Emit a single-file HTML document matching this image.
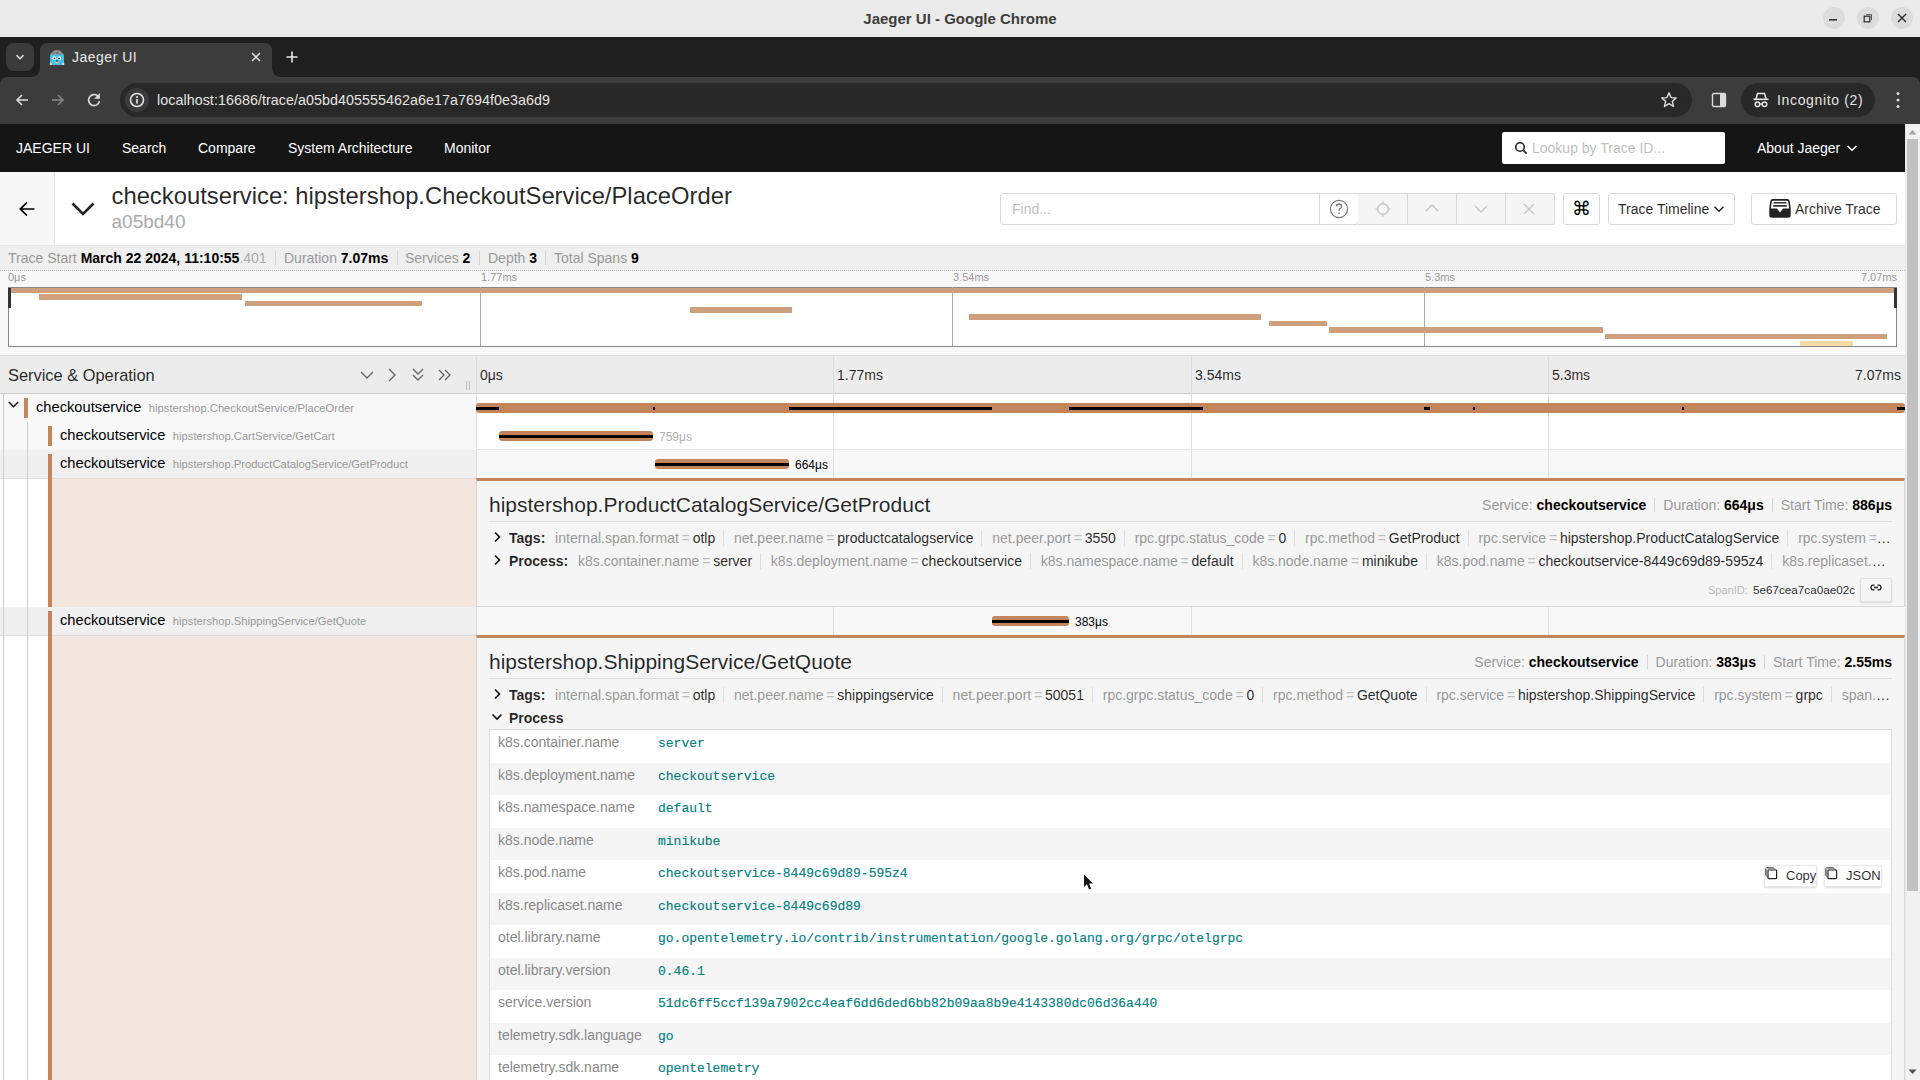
<!DOCTYPE html>
<html><head><meta charset="utf-8"><style>
*{box-sizing:border-box;margin:0;padding:0}
html,body{width:1920px;height:1080px;overflow:hidden;background:#fff;font-family:"Liberation Sans",sans-serif;color:rgba(0,0,0,.85)}
.a{position:absolute}
.nw{white-space:nowrap}
#titlebar{left:0;top:0;width:1920px;height:37px;background:#ebebeb}
#titlebar .t{left:0;width:1920px;top:10px;text-align:center;font-size:15px;font-weight:700;color:#3d3d3d}
#tabstrip{left:0;top:37px;width:1920px;height:40px;background:#1f1f1f}
#toolbar{left:0;top:77px;width:1920px;height:47px;background:#3c3c3c}
#urlpill{left:120px;top:83px;width:1572px;height:34px;border-radius:17px;background:#282828}
#nav{left:0;top:124px;width:1905px;height:48px;background:#151515}
.navi{top:140px;font-size:14px;color:#fff;line-height:16px}
.t14{font-size:14px;line-height:16px}
.lbl{color:#999}
.b{font-weight:700;color:#000}
.sep{width:1px;background:#ddd}
.btn{border:1px solid #d9d9d9;border-radius:3px;background:#fff}
.row{left:0;width:1905px;height:28px}
.svc{font-size:14.7px;color:#000}
.op{font-size:11.2px;color:#999}
.kv{white-space:nowrap;overflow:hidden;text-overflow:ellipsis;font-size:14px;line-height:16px;color:rgba(0,0,0,.85)}
.kv .it{margin-left:.7em;padding-right:.5rem;border-right:1px solid #ddd}
.kv .it:last-child{border-right:none;padding-right:0}
.kv .k{color:#999}
.kv .d{color:#bbb;padding:0 .2em}
.tblk{color:#888;font-size:14px;line-height:16px}
.tblv{color:teal;font-family:"Liberation Mono",monospace;font-size:13px;line-height:17px;white-space:pre;-webkit-text-stroke:.15px teal}
</style></head><body>
<div id="titlebar" class="a"><div class="a t">Jaeger UI - Google Chrome</div>
 <svg class="a" style="left:1822px;top:7px" width="24" height="22" viewBox="0 0 24 22"><circle cx="12" cy="11" r="11" fill="#dcdcdc"/><rect x="7" y="12" width="8" height="1.6" fill="#333"/></svg>
 <svg class="a" style="left:1856px;top:7px" width="24" height="22" viewBox="0 0 24 22"><circle cx="12" cy="11" r="11" fill="#dcdcdc"/><rect x="8.2" y="9.2" width="5.6" height="5.6" fill="none" stroke="#333" stroke-width="1.3"/><path d="M10 7.6H15.5V13" fill="none" stroke="#555" stroke-width="1"/></svg>
 <svg class="a" style="left:1890px;top:7px" width="24" height="22" viewBox="0 0 24 22"><circle cx="12" cy="11" r="11" fill="#dcdcdc"/><path d="M8 7L16 15M16 7L8 15" stroke="#333" stroke-width="1.5"/></svg>
</div>
<div id="tabstrip" class="a"></div>
<div class="a" style="left:6px;top:43px;width:28px;height:28px;border-radius:8px;background:#3b3b3b"></div>
<svg class="a" style="left:14px;top:51px" width="12" height="12" viewBox="0 0 12 12"><path d="M2.5 4.2L6 7.7L9.5 4.2" fill="none" stroke="#e6e6e6" stroke-width="1.6"/></svg>
<svg class="a" style="left:30px;top:43px" width="262" height="34" viewBox="0 0 262 34"><path d="M0 34Q10 34 10 24V8Q10 0 18 0H234Q242 0 242 8V24Q242 34 252 34Z" fill="#3c3c3c"/></svg>
<svg class="a" style="left:48px;top:49px" width="18" height="18" viewBox="0 0 18 18"><path d="M2 7Q2 4 5 4H13Q16 4 16 7V16H2Z" fill="#3ec2ea"/><path d="M3 6Q4 1 9 1Q14 1 15 6L13 5.5H5Z" fill="#8c8c8c"/><circle cx="9.2" cy="4" r=".7" fill="#a00"/><circle cx="6.3" cy="9.2" r="1.9" fill="#fff"/><circle cx="11.3" cy="9.2" r="1.9" fill="#fff"/><circle cx="6.5" cy="9.4" r=".9" fill="#000"/><circle cx="11.1" cy="9.4" r=".9" fill="#000"/><rect x="8" y="11.4" width="2" height="1.6" fill="#222"/><rect x="7.6" y="12.6" width="2.8" height="1.6" fill="#f3d9a8"/><rect x="1.8" y="13.8" width="2" height="2.2" fill="#f3d9a8"/><rect x="14.2" y="13.8" width="2" height="2.2" fill="#f3d9a8"/></svg>
<div class="a nw" style="left:72px;top:49px;font-size:14px;color:#e8e8e8;letter-spacing:.5px">Jaeger UI</div>
<svg class="a" style="left:250px;top:51px" width="12" height="12" viewBox="0 0 12 12"><path d="M2 2L10 10M10 2L2 10" stroke="#e6e6e6" stroke-width="1.5"/></svg>
<svg class="a" style="left:286px;top:51px" width="12" height="12" viewBox="0 0 12 12"><path d="M6 0.5V11.5M0.5 6H11.5" stroke="#e6e6e6" stroke-width="1.6"/></svg>
<div id="toolbar" class="a"></div><svg class="a" style="left:0;top:77px" width="8" height="8" viewBox="0 0 8 8"><path d="M0 0H8Q0 0 0 8Z" fill="#1f1f1f"/></svg><svg class="a" style="left:1912px;top:77px" width="8" height="8" viewBox="0 0 8 8"><path d="M8 0H0Q8 0 8 8Z" fill="#1f1f1f"/></svg>
<svg class="a" style="left:14px;top:92px" width="16" height="16" viewBox="0 0 16 16"><path d="M14 8H3M8 3L3 8L8 13" fill="none" stroke="#dcdcdc" stroke-width="1.6"/></svg>
<svg class="a" style="left:50px;top:92px" width="16" height="16" viewBox="0 0 16 16"><path d="M2 8H13M8 3L13 8L8 13" fill="none" stroke="#8a8a8a" stroke-width="1.6"/></svg>
<svg class="a" style="left:86px;top:92px" width="16" height="16" viewBox="0 0 16 16"><path d="M13.5 9.2A5.5 5.5 0 1 1 11.6 3.8" fill="none" stroke="#dcdcdc" stroke-width="1.6"/><path d="M13.9 1V6.8H8.1Z" fill="#dcdcdc"/></svg>
<div id="urlpill" class="a"></div>
<div class="a" style="left:125px;top:88px;width:24px;height:24px;border-radius:12px;background:#3b3b3b"></div>
<svg class="a" style="left:129px;top:92px" width="16" height="16" viewBox="0 0 16 16"><circle cx="8" cy="8" r="6.5" fill="none" stroke="#e6e6e6" stroke-width="1.5"/><rect x="7.2" y="7" width="1.6" height="4.6" fill="#e6e6e6"/><circle cx="8" cy="5" r="1" fill="#e6e6e6"/></svg>
<div class="a nw" style="left:157px;top:91.5px;font-size:14.3px;color:#e3e3e3;letter-spacing:.05px">localhost:16686/trace/a05bd405555462a6e17a7694f0e3a6d9</div>
<svg class="a" style="left:1660px;top:91px" width="18" height="18" viewBox="0 0 18 18"><path d="M9 1.8L11.1 6.6L16.2 7L12.3 10.4L13.5 15.4L9 12.7L4.5 15.4L5.7 10.4L1.8 7L6.9 6.6Z" fill="none" stroke="#dcdcdc" stroke-width="1.4" stroke-linejoin="round"/></svg>
<svg class="a" style="left:1711px;top:92px" width="16" height="16" viewBox="0 0 16 16"><rect x="1.5" y="1.5" width="13" height="13" rx="1.5" fill="none" stroke="#dcdcdc" stroke-width="1.4"/><rect x="9" y="2" width="5" height="12" fill="#dcdcdc"/></svg>
<div class="a" style="left:1741px;top:83px;width:134px;height:34px;border-radius:17px;background:#282828"></div>
<svg class="a" style="left:1752px;top:92px" width="18" height="16" viewBox="0 0 18 16"><path d="M4 7L5.5 1.5H12.5L14 7" fill="none" stroke="#e6e6e6" stroke-width="1.5"/><rect x="1.5" y="6.5" width="15" height="1.6" fill="#e6e6e6"/><circle cx="5.5" cy="12.3" r="2.3" fill="none" stroke="#e6e6e6" stroke-width="1.5"/><circle cx="12.5" cy="12.3" r="2.3" fill="none" stroke="#e6e6e6" stroke-width="1.5"/><path d="M7.8 12H10.2" stroke="#e6e6e6" stroke-width="1.3"/></svg>
<div class="a nw" style="left:1777px;top:92px;font-size:14px;color:#e3e3e3;letter-spacing:.65px">Incognito (2)</div>
<svg class="a" style="left:1894px;top:91px" width="8" height="18" viewBox="0 0 8 18"><circle cx="4" cy="2.5" r="1.5" fill="#dcdcdc"/><circle cx="4" cy="9" r="1.5" fill="#dcdcdc"/><circle cx="4" cy="15.5" r="1.5" fill="#dcdcdc"/></svg>

<div id="nav" class="a"></div>
<div class="a navi nw" style="left:16px">JAEGER UI</div>
<div class="a navi nw" style="left:122px">Search</div>
<div class="a navi nw" style="left:198px">Compare</div>
<div class="a navi nw" style="left:288px">System Architecture</div>
<div class="a navi nw" style="left:444px">Monitor</div>
<div class="a" style="left:1502px;top:132px;width:223px;height:32px;background:#fff;border-radius:2px"></div>
<svg class="a" style="left:1514px;top:141px" width="14" height="14" viewBox="0 0 14 14"><circle cx="6" cy="6" r="4.3" fill="none" stroke="#222" stroke-width="1.6"/><path d="M9.2 9.2L12.6 12.6" stroke="#222" stroke-width="1.8"/></svg>
<div class="a nw t14" style="left:1532px;top:140px;color:#bfbfbf">Lookup by Trace ID...</div>
<div class="a nw t14" style="left:1757px;top:140px;color:#fff">About Jaeger</div>
<svg class="a" style="left:1846px;top:143px" width="12" height="10" viewBox="0 0 12 10"><path d="M1.5 3L6 7.2L10.5 3" fill="none" stroke="#fff" stroke-width="1.5"/></svg>
<div class="a" style="left:0;top:172px;width:1905px;height:73px;background:#fff"></div>
<div class="a" style="left:0;top:172px;width:55px;height:73px;background:#f7f7f7;border-right:1px solid #e6e6e6"></div>
<svg class="a" style="left:18px;top:200px" width="18" height="18" viewBox="0 0 18 18"><path d="M16.5 9H2.5M9 2.3L2.3 9L9 15.7" fill="none" stroke="#000" stroke-width="1.7"/></svg>
<svg class="a" style="left:71px;top:201px" width="24" height="15" viewBox="0 0 24 15"><path d="M1.5 2.5L12 13L22.5 2.5" fill="none" stroke="#222" stroke-width="2.6"/></svg>
<div class="a nw" style="left:111.5px;top:182px;font-size:23.8px;line-height:28px;color:rgba(0,0,0,.85)">checkoutservice: hipstershop.CheckoutService/PlaceOrder</div>
<div class="a nw" style="left:111.5px;top:211px;font-size:19px;line-height:21px;color:#aaa">a05bd40</div>
<div class="a" style="left:1000px;top:193px;width:359px;height:32px;border:1px solid #d9d9d9;border-radius:3px;background:#fff"></div>
<div class="a nw t14" style="left:1012px;top:201px;color:#bfbfbf">Find...</div>
<div class="a" style="left:1319px;top:193px;width:1px;height:32px;background:#d9d9d9"></div>
<svg class="a" style="left:1327px;top:197px" width="24" height="24" viewBox="0 0 24 24"><circle cx="12" cy="12" r="8.6" fill="none" stroke="#777" stroke-width="1.2"/><path d="M9.4 9.6Q9.4 7 12 7Q14.6 7 14.6 9.4Q14.6 11 12.6 11.8Q12 12.1 12 13.2V13.8" fill="none" stroke="#777" stroke-width="1.3"/><circle cx="12" cy="16.3" r=".9" fill="#777"/></svg>
<div class="a" style="left:1358px;top:193px;width:197px;height:32px;border:1px solid #d9d9d9;border-left:none;border-radius:0 3px 3px 0;background:#f5f5f5"></div>
<div class="a" style="left:1407px;top:193px;width:1px;height:32px;background:#d9d9d9"></div>
<div class="a" style="left:1456px;top:193px;width:1px;height:32px;background:#d9d9d9"></div>
<div class="a" style="left:1505px;top:193px;width:1px;height:32px;background:#d9d9d9"></div>
<svg class="a" style="left:1374px;top:200px" width="18" height="18" viewBox="0 0 18 18"><circle cx="9" cy="9" r="5.3" fill="none" stroke="#c8c8c8" stroke-width="1.5"/><path d="M9 1.5V3.7M9 14.3V16.5M1.5 9H3.7M14.3 9H16.5" stroke="#c8c8c8" stroke-width="1.5"/></svg>
<svg class="a" style="left:1424px;top:202px" width="16" height="12" viewBox="0 0 16 12"><path d="M2 9L8 3L14 9" fill="none" stroke="#c8c8c8" stroke-width="1.5"/></svg>
<svg class="a" style="left:1473px;top:203px" width="16" height="12" viewBox="0 0 16 12"><path d="M2 3L8 9L14 3" fill="none" stroke="#c8c8c8" stroke-width="1.5"/></svg>
<svg class="a" style="left:1522px;top:202px" width="14" height="14" viewBox="0 0 14 14"><path d="M2 2L12 12M12 2L2 12" stroke="#c8c8c8" stroke-width="1.5"/></svg>
<div class="a btn" style="left:1563px;top:193px;width:37px;height:32px;box-shadow:0 2px 0 rgba(0,0,0,.015)"></div>
<div class="a nw" style="left:1572px;top:198px;font-size:19px;line-height:22px;color:#000">&#8984;</div>
<div class="a btn" style="left:1608px;top:193px;width:127px;height:32px"></div>
<div class="a nw t14" style="left:1618px;top:201px;color:rgba(0,0,0,.85)">Trace Timeline</div>
<svg class="a" style="left:1713px;top:204px" width="12" height="10" viewBox="0 0 12 10"><path d="M1.5 2.8L6 7.2L10.5 2.8" fill="none" stroke="#222" stroke-width="1.5"/></svg>
<div class="a btn" style="left:1751px;top:193px;width:146px;height:32px"></div>
<svg class="a" style="left:1768.5px;top:199px" width="22" height="19" viewBox="0 0 22 19"><path d="M1 9.8L2.1 2.2Q2.4 .9 3.8 .9H18.2Q19.6 .9 19.9 2.2L21 9.8" fill="#fff" stroke="#222" stroke-width="1.6"/><rect x="4.6" y="3.1" width="12.8" height="1.4" fill="#222"/><rect x="4.2" y="6.1" width="13.6" height="1.6" fill="#222"/><path d="M.3 9.6H7.9L11 13.4L14.1 9.6H21.7V16.4Q21.7 18.8 19.3 18.8H2.7Q.3 18.8 .3 16.4Z" fill="#222"/></svg>
<div class="a nw t14" style="left:1795px;top:201px;color:rgba(0,0,0,.85)">Archive Trace</div>
<div class="a" style="left:0;top:245px;width:1905px;height:26px;background:#efefef;border-top:1px solid #e6e6e6;border-bottom:1px dotted #c4c4c4"></div>
<div class="a nw t14" style="left:8px;top:250px"><span class="lbl">Trace Start</span> <span class="b">March 22 2024, 11:10:55</span><span style="color:#aaa">.401</span><span class="a" style="left:267px;top:1px;width:1px;height:14px;background:#d6d6d6"></span></div>
<div class="a nw t14" style="left:284px;top:250px"><span class="lbl">Duration</span> <span class="b">7.07ms</span></div>
<div class="a nw t14" style="left:405px;top:250px"><span class="lbl">Services</span> <span class="b">2</span></div>
<div class="a nw t14" style="left:488px;top:250px"><span class="lbl">Depth</span> <span class="b">3</span></div>
<div class="a nw t14" style="left:554px;top:250px"><span class="lbl">Total Spans</span> <span class="b">9</span></div>
<div class="a" style="left:397px;top:251px;width:1px;height:14px;background:#d6d6d6"></div>
<div class="a" style="left:479px;top:251px;width:1px;height:14px;background:#d6d6d6"></div>
<div class="a" style="left:545px;top:251px;width:1px;height:14px;background:#d6d6d6"></div>
<div class="a" style="left:0;top:271px;width:1905px;height:85px;background:#f8f8f8;border-bottom:1px solid #ddd"></div>
<div class="a nw" style="left:8px;top:271px;font-size:11px;line-height:12px;color:#999">0μs</div>
<div class="a nw" style="left:481px;top:271px;font-size:11px;line-height:12px;color:#999">1.77ms</div>
<div class="a nw" style="left:953px;top:271px;font-size:11px;line-height:12px;color:#999">3.54ms</div>
<div class="a nw" style="left:1425px;top:271px;font-size:11px;line-height:12px;color:#999">5.3ms</div>
<div class="a nw" style="left:1797px;top:271px;width:100px;text-align:right;font-size:11px;line-height:12px;color:#999">7.07ms</div>
<div class="a" style="left:8px;top:287px;width:1889px;height:60px;background:#fff;border:1px solid #888"></div>
<div class="a" style="left:480px;top:287px;width:1px;height:59px;background:#aaa"></div>
<div class="a" style="left:952px;top:287px;width:1px;height:59px;background:#aaa"></div>
<div class="a" style="left:1424px;top:287px;width:1px;height:59px;background:#aaa"></div>
<div class="a" style="left:9px;top:287.5px;width:1886px;height:5.5px;background:#cfa07e"></div>
<div class="a" style="left:39px;top:294px;width:203px;height:5.5px;background:#cfa07e"></div>
<div class="a" style="left:245px;top:300.5px;width:177px;height:5.5px;background:#cfa07e"></div>
<div class="a" style="left:690px;top:307px;width:102px;height:5.5px;background:#cfa07e"></div>
<div class="a" style="left:969px;top:314px;width:292px;height:5.5px;background:#cfa07e"></div>
<div class="a" style="left:1269px;top:320.5px;width:58px;height:5.5px;background:#cfa07e"></div>
<div class="a" style="left:1329px;top:327px;width:274px;height:5.5px;background:#cfa07e"></div>
<div class="a" style="left:1605px;top:333.5px;width:282px;height:5.5px;background:#cfa07e"></div>
<div class="a" style="left:1800px;top:340.5px;width:53px;height:5px;background:#f5d9a2"></div>
<div class="a" style="left:8px;top:288px;width:3px;height:20px;background:#333"></div>
<div class="a" style="left:1894px;top:288px;width:3px;height:20px;background:#333"></div>
<div class="a" style="left:0;top:356px;width:1905px;height:38px;background:#ececec;border-bottom:1px solid #ccc"></div>
<div class="a nw" style="left:8px;top:366px;font-size:16.4px;line-height:19px;color:rgba(0,0,0,.85)">Service &amp; Operation</div>
<svg class="a" style="left:359px;top:368px" width="16" height="14" viewBox="0 0 16 14"><path d="M2 4L8 10L14 4" fill="none" stroke="#666" stroke-width="1.4"/></svg>
<svg class="a" style="left:385px;top:368px" width="14" height="14" viewBox="0 0 14 14"><path d="M4 1L10 7L4 13" fill="none" stroke="#666" stroke-width="1.4"/></svg>
<svg class="a" style="left:411px;top:367px" width="14" height="16" viewBox="0 0 14 16"><path d="M2 2L7 7L12 2M2 8L7 13L12 8" fill="none" stroke="#666" stroke-width="1.4"/></svg>
<svg class="a" style="left:437px;top:368px" width="16" height="14" viewBox="0 0 16 14"><path d="M2 2L7 7L2 12M8 2L13 7L8 12" fill="none" stroke="#666" stroke-width="1.4"/></svg>
<div class="a" style="left:466px;top:381px;width:1px;height:9px;background:#bbb"></div>
<div class="a" style="left:469px;top:381px;width:1px;height:9px;background:#bbb"></div>
<div class="a" style="left:476px;top:356px;width:1px;height:38px;background:#ddd"></div>
<div class="a nw" style="left:480px;top:367px;font-size:14px;line-height:16px;color:rgba(0,0,0,.85)">0μs</div>
<div class="a nw" style="left:837px;top:367px;font-size:14px;line-height:16px;color:rgba(0,0,0,.85)">1.77ms</div>
<div class="a nw" style="left:1195px;top:367px;font-size:14px;line-height:16px;color:rgba(0,0,0,.85)">3.54ms</div>
<div class="a nw" style="left:1552px;top:367px;font-size:14px;line-height:16px;color:rgba(0,0,0,.85)">5.3ms</div>
<div class="a nw" style="left:1801px;top:367px;width:100px;text-align:right;font-size:14px;line-height:16px;color:rgba(0,0,0,.85)">7.07ms</div>
<div class="a" style="left:833px;top:356px;width:1px;height:38px;background:#ddd"></div>
<div class="a" style="left:1191px;top:356px;width:1px;height:38px;background:#ddd"></div>
<div class="a" style="left:1548px;top:356px;width:1px;height:38px;background:#ddd"></div>
<div class="a" style="left:0;top:394px;width:476px;height:28px;background:#f8f8f8"></div>
<div class="a" style="left:476px;top:394px;width:1429px;height:28px;background:#fff;border-left:1px solid #ddd"></div>
<div class="a" style="left:833px;top:394px;width:1px;height:28px;background:#e0e0e0"></div>
<div class="a" style="left:1191px;top:394px;width:1px;height:28px;background:#e0e0e0"></div>
<div class="a" style="left:1548px;top:394px;width:1px;height:28px;background:#e0e0e0"></div>
<svg class="a" style="left:7px;top:399px" width="14" height="12" viewBox="0 0 14 12"><path d="M1.8 3L6.5 7.8L11.2 3" fill="none" stroke="#111" stroke-width="1.5"/></svg>
<div class="a" style="left:24px;top:398px;width:4px;height:20px;background:#c2855c"></div>
<div class="a nw" style="left:36px;top:398px"><span class="svc">checkoutservice</span> <span class="op">&nbsp;hipstershop.CheckoutService/PlaceOrder</span></div>
<div class="a" style="left:476px;top:403px;width:1429px;height:10px;background:#c2855c;border-radius:3px"></div>
<div class="a" style="left:476px;top:407px;width:23px;height:3px;background:#000"></div>
<div class="a" style="left:653px;top:407px;width:2px;height:3px;background:#000"></div>
<div class="a" style="left:789px;top:407px;width:203px;height:3px;background:#000"></div>
<div class="a" style="left:1069px;top:407px;width:134px;height:3px;background:#000"></div>
<div class="a" style="left:1424px;top:407px;width:6px;height:3px;background:#000"></div>
<div class="a" style="left:1473px;top:407px;width:2px;height:3px;background:#000"></div>
<div class="a" style="left:1682px;top:407px;width:2px;height:3px;background:#000"></div>
<div class="a" style="left:1897px;top:407px;width:8px;height:3px;background:#000"></div>
<div class="a" style="left:0;top:422px;width:476px;height:28px;background:#f8f8f8"></div>
<div class="a" style="left:476px;top:422px;width:1429px;height:28px;background:#fff;border-left:1px solid #ddd"></div>
<div class="a" style="left:833px;top:422px;width:1px;height:28px;background:#e0e0e0"></div>
<div class="a" style="left:1191px;top:422px;width:1px;height:28px;background:#e0e0e0"></div>
<div class="a" style="left:1548px;top:422px;width:1px;height:28px;background:#e0e0e0"></div>
<div class="a" style="left:476px;top:449px;width:1429px;height:1px;background:#e4e4e4"></div>
<div class="a" style="left:48px;top:426px;width:4px;height:20px;background:#c2855c"></div>
<div class="a nw" style="left:60px;top:426px"><span class="svc">checkoutservice</span> <span class="op">&nbsp;hipstershop.CartService/GetCart</span></div>
<div class="a" style="left:499px;top:431px;width:154px;height:10px;background:#c2855c;border-radius:3px"></div>
<div class="a" style="left:499px;top:435px;width:154px;height:3px;background:#000"></div>
<div class="a nw" style="left:659px;top:430px;font-size:12px;line-height:14px;color:#b0b0b0">759μs</div>
<div class="a" style="left:0;top:450px;width:476px;height:28px;background:#f0f0f0"></div>
<div class="a" style="left:476px;top:450px;width:1429px;height:28px;background:#f8f8f8;border-left:1px solid #ddd"></div>
<div class="a" style="left:833px;top:450px;width:1px;height:28px;background:#e0e0e0"></div>
<div class="a" style="left:1191px;top:450px;width:1px;height:28px;background:#e0e0e0"></div>
<div class="a" style="left:1548px;top:450px;width:1px;height:28px;background:#e0e0e0"></div>
<div class="a nw" style="left:60px;top:454px"><span class="svc">checkoutservice</span> <span class="op">&nbsp;hipstershop.ProductCatalogService/GetProduct</span></div>
<div class="a" style="left:655px;top:459px;width:134px;height:10px;background:#c2855c;border-radius:3px"></div>
<div class="a" style="left:655px;top:463px;width:134px;height:3px;background:#000"></div>
<div class="a nw" style="left:795px;top:458px;font-size:12px;line-height:14px;color:#000">664μs</div>
<div class="a" style="left:4px;top:478px;width:44px;height:129px;background:#fff"></div>
<div class="a" style="left:52px;top:478px;width:424px;height:129px;background:#f3e6de"></div>
<div class="a" style="left:476px;top:478px;width:1429px;height:129px;background:#f5f5f5;border:1px solid #d8d8d8;border-top:3px solid #c2855c"></div>
<div class="a nw" style="left:489px;top:493px;font-size:21px;line-height:24px;color:rgba(0,0,0,.85)">hipstershop.ProductCatalogService/GetProduct</div>
<div class="a nw t14" style="right:28px;top:497px;text-align:right"><span class="lbl">Service:</span> <span class="b">checkoutservice</span><span style="display:inline-block;width:1px;height:14px;background:#d6d6d6;margin:0 8px;vertical-align:-2px"></span><span class="lbl">Duration:</span> <span class="b">664μs</span><span style="display:inline-block;width:1px;height:14px;background:#d6d6d6;margin:0 8px;vertical-align:-2px"></span><span class="lbl">Start Time:</span> <span class="b">886μs</span></div>
<div class="a" style="left:489px;top:521px;width:1403px;height:1px;background:#ddd"></div>
<svg class="a" style="left:492px;top:531px" width="10" height="12" viewBox="0 0 10 12"><path d="M3 1.5L7.5 6L3 10.5" fill="none" stroke="#111" stroke-width="1.6"/></svg>
<div class="a kv" style="left:509px;top:530px;width:1382px"><span class="b" style="font-weight:700;color:rgba(0,0,0,.85)">Tags:</span><span class="it"><span class="k">internal.span.format</span><span class="d">=</span>otlp</span><span class="it"><span class="k">net.peer.name</span><span class="d">=</span>productcatalogservice</span><span class="it"><span class="k">net.peer.port</span><span class="d">=</span>3550</span><span class="it"><span class="k">rpc.grpc.status_code</span><span class="d">=</span>0</span><span class="it"><span class="k">rpc.method</span><span class="d">=</span>GetProduct</span><span class="it"><span class="k">rpc.service</span><span class="d">=</span>hipstershop.ProductCatalogService</span><span class="it"><span class="k">rpc.system</span><span class="d">=</span>grpc</span><span class="it"><span class="k">span.kind</span><span class="d">=</span>client</span></div>
<svg class="a" style="left:492px;top:554px" width="10" height="12" viewBox="0 0 10 12"><path d="M3 1.5L7.5 6L3 10.5" fill="none" stroke="#111" stroke-width="1.6"/></svg>
<div class="a kv" style="left:509px;top:553px;width:1377px"><span style="font-weight:700;color:rgba(0,0,0,.85)">Process:</span><span class="it"><span class="k">k8s.container.name</span><span class="d">=</span>server</span><span class="it"><span class="k">k8s.deployment.name</span><span class="d">=</span>checkoutservice</span><span class="it"><span class="k">k8s.namespace.name</span><span class="d">=</span>default</span><span class="it"><span class="k">k8s.node.name</span><span class="d">=</span>minikube</span><span class="it"><span class="k">k8s.pod.name</span><span class="d">=</span>checkoutservice-8449c69d89-595z4</span><span class="it"><span class="k">k8s.replicaset.name</span><span class="d">=</span>checkoutservice-8449c69d89</span></div>
<div class="a nw" style="left:1708px;top:584px;font-size:11px;line-height:13px;color:#bbb">SpanID:</div>
<div class="a nw" style="left:1753px;top:583px;font-size:11.7px;line-height:14px;color:rgba(0,0,0,.85)">5e67cea7ca0ae02c</div>
<div class="a" style="left:1860px;top:578px;width:32px;height:24px;border:1px solid #e0e0e0;border-radius:2px;background:#f5f5f5;box-shadow:0 1px 2px rgba(0,0,0,.12)"></div>
<svg class="a" style="left:1869px;top:582px" width="14" height="12" viewBox="0 0 14 12"><path d="M5.6 3.2H4.2Q2 3.2 2 5.5Q2 7.8 4.2 7.8H5.6M8.4 3.2H9.8Q12 3.2 12 5.5Q12 7.8 9.8 7.8H8.4M5 5.5H9" fill="none" stroke="#222" stroke-width="1.3"/></svg>
<div class="a" style="left:0;top:607px;width:476px;height:28px;background:#f0f0f0"></div>
<div class="a" style="left:476px;top:607px;width:1429px;height:28px;background:#f8f8f8;border-left:1px solid #ddd"></div>
<div class="a" style="left:833px;top:607px;width:1px;height:28px;background:#e0e0e0"></div>
<div class="a" style="left:1191px;top:607px;width:1px;height:28px;background:#e0e0e0"></div>
<div class="a" style="left:1548px;top:607px;width:1px;height:28px;background:#e0e0e0"></div>
<div class="a nw" style="left:60px;top:611px"><span class="svc">checkoutservice</span> <span class="op">&nbsp;hipstershop.ShippingService/GetQuote</span></div>
<div class="a" style="left:992px;top:616px;width:77px;height:10px;background:#c2855c;border-radius:3px"></div>
<div class="a" style="left:992px;top:620px;width:77px;height:3px;background:#000"></div>
<div class="a nw" style="left:1075px;top:615px;font-size:12px;line-height:14px;color:#000">383μs</div>
<div class="a" style="left:4px;top:635px;width:44px;height:460px;background:#fff"></div>
<div class="a" style="left:52px;top:635px;width:424px;height:460px;background:#f3e6de"></div>
<div class="a" style="left:476px;top:635px;width:1429px;height:460px;background:#f5f5f5;border:1px solid #d8d8d8;border-top:3px solid #c2855c"></div>
<div class="a nw" style="left:489px;top:650px;font-size:21px;line-height:24px;color:rgba(0,0,0,.85)">hipstershop.ShippingService/GetQuote</div>
<div class="a nw t14" style="right:28px;top:654px;text-align:right"><span class="lbl">Service:</span> <span class="b">checkoutservice</span><span style="display:inline-block;width:1px;height:14px;background:#d6d6d6;margin:0 8px;vertical-align:-2px"></span><span class="lbl">Duration:</span> <span class="b">383μs</span><span style="display:inline-block;width:1px;height:14px;background:#d6d6d6;margin:0 8px;vertical-align:-2px"></span><span class="lbl">Start Time:</span> <span class="b">2.55ms</span></div>
<div class="a" style="left:489px;top:678px;width:1403px;height:1px;background:#ddd"></div>
<svg class="a" style="left:492px;top:688px" width="10" height="12" viewBox="0 0 10 12"><path d="M3 1.5L7.5 6L3 10.5" fill="none" stroke="#111" stroke-width="1.6"/></svg>
<div class="a kv" style="left:509px;top:687px;width:1382px"><span class="b" style="font-weight:700;color:rgba(0,0,0,.85)">Tags:</span><span class="it"><span class="k">internal.span.format</span><span class="d">=</span>otlp</span><span class="it"><span class="k">net.peer.name</span><span class="d">=</span>shippingservice</span><span class="it"><span class="k">net.peer.port</span><span class="d">=</span>50051</span><span class="it"><span class="k">rpc.grpc.status_code</span><span class="d">=</span>0</span><span class="it"><span class="k">rpc.method</span><span class="d">=</span>GetQuote</span><span class="it"><span class="k">rpc.service</span><span class="d">=</span>hipstershop.ShippingService</span><span class="it"><span class="k">rpc.system</span><span class="d">=</span>grpc</span><span class="it"><span class="k">span.kind</span><span class="d">=</span>client</span></div>
<svg class="a" style="left:491px;top:712px" width="12" height="10" viewBox="0 0 12 10"><path d="M1.5 2.5L6 7L10.5 2.5" fill="none" stroke="#111" stroke-width="1.6"/></svg>
<div class="a nw" style="left:509px;top:710px;font-size:14px;line-height:16px;font-weight:700;color:rgba(0,0,0,.85)">Process</div>
<div class="a" style="left:489px;top:729px;width:1403px;height:360px;background:#fff;border:1px solid #ddd"></div>
<div class="a" style="left:490px;top:730.0px;width:1401px;height:32.5px;background:#fff"></div>
<div class="a nw tblk" style="left:498px;top:734.0px">k8s.container.name</div>
<div class="a tblv" style="left:658px;top:735.0px">server</div>
<div class="a" style="left:490px;top:762.5px;width:1401px;height:32.5px;background:#f5f5f5"></div>
<div class="a nw tblk" style="left:498px;top:766.5px">k8s.deployment.name</div>
<div class="a tblv" style="left:658px;top:767.5px">checkoutservice</div>
<div class="a" style="left:490px;top:795.0px;width:1401px;height:32.5px;background:#fff"></div>
<div class="a nw tblk" style="left:498px;top:799.0px">k8s.namespace.name</div>
<div class="a tblv" style="left:658px;top:800.0px">default</div>
<div class="a" style="left:490px;top:827.5px;width:1401px;height:32.5px;background:#f5f5f5"></div>
<div class="a nw tblk" style="left:498px;top:831.5px">k8s.node.name</div>
<div class="a tblv" style="left:658px;top:832.5px">minikube</div>
<div class="a" style="left:490px;top:860.0px;width:1401px;height:32.5px;background:#fff"></div>
<div class="a nw tblk" style="left:498px;top:864.0px">k8s.pod.name</div>
<div class="a tblv" style="left:658px;top:865.0px">checkoutservice-8449c69d89-595z4</div>
<div class="a" style="left:490px;top:892.5px;width:1401px;height:32.5px;background:#f5f5f5"></div>
<div class="a nw tblk" style="left:498px;top:896.5px">k8s.replicaset.name</div>
<div class="a tblv" style="left:658px;top:897.5px">checkoutservice-8449c69d89</div>
<div class="a" style="left:490px;top:925.0px;width:1401px;height:32.5px;background:#fff"></div>
<div class="a nw tblk" style="left:498px;top:929.0px">otel.library.name</div>
<div class="a tblv" style="left:658px;top:930.0px">go.opentelemetry.io/contrib/instrumentation/google.golang.org/grpc/otelgrpc</div>
<div class="a" style="left:490px;top:957.5px;width:1401px;height:32.5px;background:#f5f5f5"></div>
<div class="a nw tblk" style="left:498px;top:961.5px">otel.library.version</div>
<div class="a tblv" style="left:658px;top:962.5px">0.46.1</div>
<div class="a" style="left:490px;top:990.0px;width:1401px;height:32.5px;background:#fff"></div>
<div class="a nw tblk" style="left:498px;top:994.0px">service.version</div>
<div class="a tblv" style="left:658px;top:995.0px">51dc6ff5ccf139a7902cc4eaf6dd6ded6bb82b09aa8b9e4143380dc06d36a440</div>
<div class="a" style="left:490px;top:1022.5px;width:1401px;height:32.5px;background:#f5f5f5"></div>
<div class="a nw tblk" style="left:498px;top:1026.5px">telemetry.sdk.language</div>
<div class="a tblv" style="left:658px;top:1027.5px">go</div>
<div class="a" style="left:490px;top:1055.0px;width:1401px;height:32.5px;background:#fff"></div>
<div class="a nw tblk" style="left:498px;top:1059.0px">telemetry.sdk.name</div>
<div class="a tblv" style="left:658px;top:1060.0px">opentelemetry</div>
<div class="a" style="left:1764px;top:865px;width:53px;height:22px;background:#fff;border:1px solid #e8e8e8;border-radius:2px;box-shadow:0 1px 2px rgba(0,0,0,.15)"></div>
<div class="a" style="left:1824px;top:865px;width:58px;height:22px;background:#fff;border:1px solid #e8e8e8;border-radius:2px;box-shadow:0 1px 2px rgba(0,0,0,.15)"></div>
<svg class="a" style="left:1765px;top:867px" width="13" height="13" viewBox="0 0 13 13"><rect x=".6" y=".6" width="8.4" height="8.4" rx="1" fill="#fff" stroke="#666" stroke-width="1"/><rect x="1.6" y="1.6" width="8.4" height="8.4" rx="1" fill="#fff" stroke="#888" stroke-width="1"/><rect x="3" y="3" width="8.6" height="8.6" rx=".8" fill="#fff" stroke="#222" stroke-width="1.2"/></svg>
<svg class="a" style="left:1825px;top:867px" width="13" height="13" viewBox="0 0 13 13"><rect x=".6" y=".6" width="8.4" height="8.4" rx="1" fill="#fff" stroke="#666" stroke-width="1"/><rect x="1.6" y="1.6" width="8.4" height="8.4" rx="1" fill="#fff" stroke="#888" stroke-width="1"/><rect x="3" y="3" width="8.6" height="8.6" rx=".8" fill="#fff" stroke="#222" stroke-width="1.2"/></svg>
<div class="a nw" style="left:1786px;top:868px;font-size:13px;line-height:15px;color:rgba(0,0,0,.85)">Copy</div>
<div class="a nw" style="left:1846px;top:868px;font-size:13px;line-height:15px;color:rgba(0,0,0,.85)">JSON</div>
<svg class="a" style="left:1082px;top:872.5px" width="14" height="20" viewBox="0 0 14 20"><path d="M2 1.5V14L5 11.3L7.1 16.6L9.2 15.8L7 10.6H11Z" fill="#151515" stroke="#fff" stroke-width="1.6" stroke-linejoin="round" paint-order="stroke"/></svg>
<div class="a" style="left:0;top:478px;width:476px;height:1px;background:#ddd"></div>
<div class="a" style="left:0;top:635px;width:476px;height:1px;background:#ddd"></div>
<div class="a" style="left:48px;top:454px;width:4px;height:153px;background:#c2855c"></div>
<div class="a" style="left:48px;top:611px;width:4px;height:469px;background:#c2855c"></div>
<div class="a" style="left:3px;top:394px;width:1px;height:686px;background:#ccc"></div>
<div class="a" style="left:27px;top:422px;width:1px;height:658px;background:#ccc"></div>
<div class="a" style="left:1905px;top:124px;width:15px;height:956px;background:#f1f1f1;border-left:1px solid #e8e8e8"></div>
<div class="a" style="left:1907px;top:139px;width:11px;height:752px;background:#c1c1c1"></div>
<svg class="a" style="left:1907px;top:128px" width="11" height="8" viewBox="0 0 11 8"><path d="M1.5 6.5L5.5 2L9.5 6.5Z" fill="#a3a3a3"/></svg>
<svg class="a" style="left:1907px;top:1068px" width="11" height="8" viewBox="0 0 11 8"><path d="M1.5 1.5L5.5 6L9.5 1.5Z" fill="#505050"/></svg>
</body></html>
